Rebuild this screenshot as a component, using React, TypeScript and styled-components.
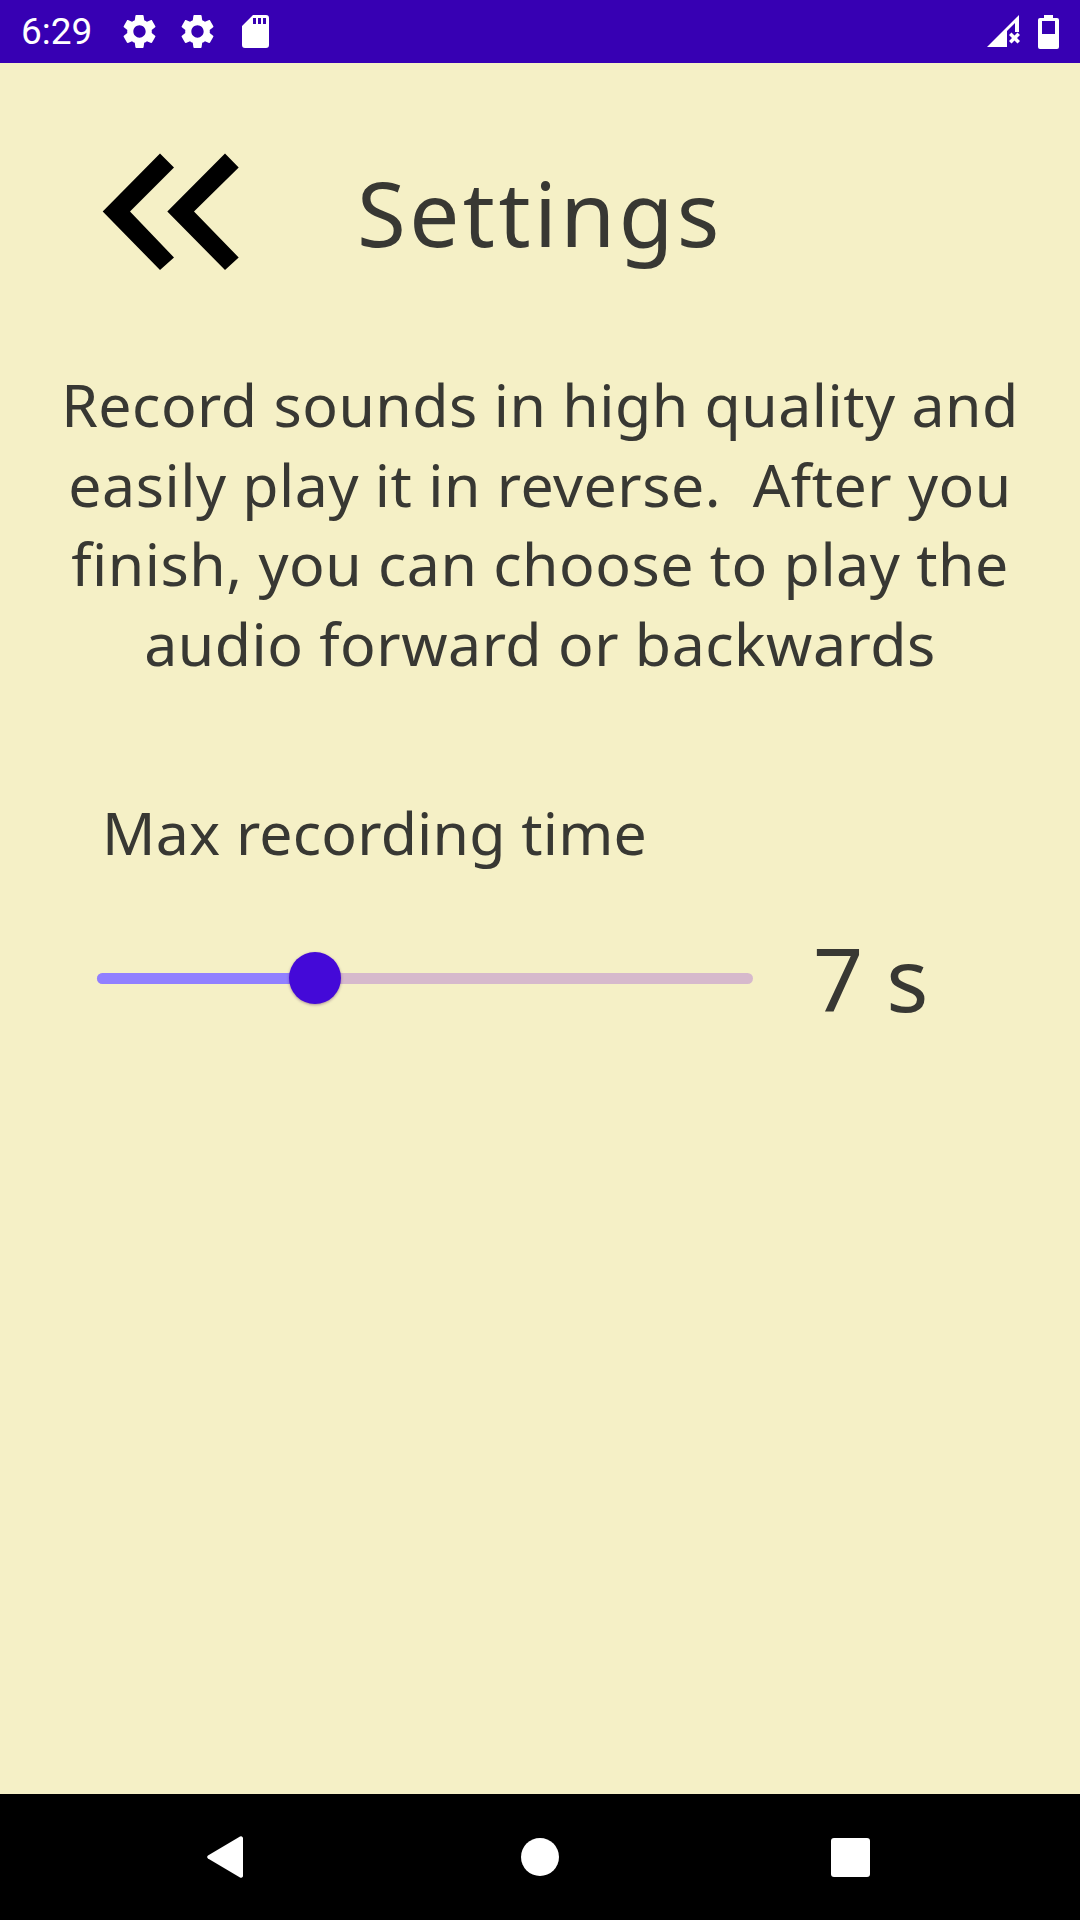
import styled, { createGlobalStyle } from 'styled-components';

const GEAR =
  'M19.14 12.94c.04-.3.06-.61.06-.94 0-.32-.02-.64-.07-.94l2.03-1.58c.18-.14.23-.41.12-.61l-1.92-3.32c-.12-.22-.37-.29-.59-.22l-2.39.96c-.5-.38-1.03-.7-1.62-.94l-.36-2.54c-.04-.24-.24-.41-.48-.41h-3.84c-.24 0-.43.17-.47.41l-.36 2.54c-.59.24-1.13.57-1.62.94l-2.39-.96c-.22-.08-.47 0-.59.22L2.74 8.87c-.12.21-.08.47.12.61l2.03 1.58c-.05.3-.09.63-.09.94s.02.64.07.94l-2.03 1.58c-.18.14-.23.41-.12.61l1.92 3.32c.12.22.37.29.59.22l2.39-.96c.5.38 1.03.7 1.62.94l.36 2.54c.05.24.24.41.48.41h3.84c.24 0 .44-.17.47-.41l.36-2.54c.59-.24 1.13-.56 1.62-.94l2.39.96c.22.08.47 0 .59-.22l1.92-3.32c.12-.22.07-.47-.12-.61l-2.01-1.58zM12 15.6c-1.98 0-3.6-1.62-3.6-3.6s1.62-3.6 3.6-3.6 3.6 1.62 3.6 3.6-1.62 3.6-3.6 3.6z';

const GlobalStyle = createGlobalStyle`
  html, body {
    margin: 0;
    padding: 0;
    background: #f5f0c6;
  }
`;

const Screen = styled.div`
  width: 1080px;
  height: 1920px;
  display: flex;
  flex-direction: column;
  background: #f5f0c6;
  color: #383833;
  font-family: "Noto Sans", sans-serif;
  overflow: hidden;
`;

const StatusBar = styled.div`
  height: 63px;
  flex: none;
  display: flex;
  align-items: center;
  padding: 0 21px 0 21px;
  background: #3700b3;
  color: #fff;
`;

const Clock = styled.span`
  font-family: Roboto, sans-serif;
  font-size: 37px;
  width: 98px;
`;

const StatusIcons = styled.div`
  display: flex;
  align-items: center;
  gap: 17px;
`;

const SdCardIcon = styled.svg`
  margin-left: 7px;
`;

const RightIcons = styled.div`
  display: flex;
  align-items: center;
  gap: 17px;
  margin-left: auto;
`;

const Content = styled.main`
  flex: 1;
  display: flex;
  flex-direction: column;
`;

const Header = styled.header`
  display: flex;
  align-items: center;
  padding: 86px 0 0 102px;
  height: 126px;
`;

const BackIcon = styled.svg`
  width: 137px;
  height: 118px;
  flex: none;
`;

const Title = styled.h1`
  margin: 0 0 0 118px;
  font-size: 89px;
  font-weight: 400;
  letter-spacing: 3.4px;
`;

const Intro = styled.p`
  margin: 90px 0 0;
  padding: 0 40px;
  text-align: center;
  font-size: 59px;
  line-height: 79.5px;
  letter-spacing: 0.5px;
`;

const FieldLabel = styled.div`
  margin: 109px 0 0 102px;
  font-size: 59px;
  line-height: 80px;
  letter-spacing: 0.2px;
`;

const SliderRow = styled.div`
  display: flex;
  align-items: center;
  margin-top: 56px;
  padding-left: 97px;
`;

const Track = styled.div`
  position: relative;
  width: 656px;
  height: 11px;
  border-radius: 6px;
  background: #d6b9cc;
`;

const TrackFill = styled.div`
  height: 100%;
  border-radius: 6px 0 0 6px;
  background: #9180ff;
`;

const Thumb = styled.div`
  position: absolute;
  top: 50%;
  width: 52px;
  height: 52px;
  border-radius: 50%;
  background: #4409d8;
  box-shadow: 0 1px 3px rgba(60, 0, 80, 0.4);
  transform: translate(-50%, -50%);
`;

const SliderValue = styled.span`
  margin-left: 60px;
  font-size: 88px;
  line-height: 100px;
`;

const NavBar = styled.nav`
  height: 126px;
  flex: none;
  display: flex;
  align-items: center;
  justify-content: space-between;
  padding: 0 210px 0 207px;
  background: #000;
`;

const NavCircle = styled.div`
  width: 38px;
  height: 38px;
  margin-left: 6px;
  border-radius: 50%;
  background: #fff;
`;

const NavSquare = styled.div`
  width: 39px;
  height: 39px;
  border-radius: 3px;
  background: #fff;
`;

const Gear = () => (
  <svg width="41" height="41" viewBox="0 0 24 24" fill="#fff">
    <path d={GEAR} />
  </svg>
);

const SdCard = () => (
  <SdCardIcon width="27" height="33" viewBox="0 0 27 33" fill="#fff">
    <path
      fillRule="evenodd"
      d="M11 0H24a3 3 0 0 1 3 3V30a3 3 0 0 1-3 3H3a3 3 0 0 1-3-3V11ZM11 3V9H14V3ZM16 3V9H19V3ZM21 3V9H24V3Z"
    />
  </SdCardIcon>
);

const Signal = () => (
  <svg width="34" height="33" viewBox="0 0 34 33" fill="#fff">
    <path
      fillRule="evenodd"
      d="M0 32L32 0V17H28V8L20 16V32ZM22 20L24.5 17.5 27.5 20.5 30.5 17.5 33 20 30 23 33 26 30.5 28.5 27.5 25.5 24.5 28.5 22 26 25 23Z"
    />
  </svg>
);

const Battery = () => (
  <svg width="21" height="34" viewBox="0 0 21 34" fill="#fff">
    <path
      fillRule="evenodd"
      d="M6 0H15V3H19a2 2 0 0 1 2 2V32a2 2 0 0 1-2 2H2a2 2 0 0 1-2-2V5a2 2 0 0 1 2-2H6ZM4 6V19H17V6Z"
    />
  </svg>
);

const App = () => {
  const sliderPercent = 33.2;

  return (
    <>
      <GlobalStyle />
      <Screen>
        <StatusBar>
          <Clock>6:29</Clock>
          <StatusIcons>
            <Gear />
            <Gear />
            <SdCard />
          </StatusIcons>
          <RightIcons>
            <Signal />
            <Battery />
          </RightIcons>
        </StatusBar>

        <Content>
          <Header>
            <BackIcon viewBox="0 0 137 118" fill="#000">
              <path d="M0.7 58.5 58 0.5 72 14.5 28 58.5 72 104.5 58 117ZM65.3 58.5 123 0.5 136.7 14.5 92 58.5 136.7 104.5 123 117Z" />
            </BackIcon>
            <Title>Settings</Title>
          </Header>

          <Intro>
            Record sounds in high quality and
            <br />
            easily play it in reverse.&nbsp; After you
            <br />
            finish, you can choose to play the
            <br />
            audio forward or backwards
          </Intro>

          <FieldLabel>Max recording time</FieldLabel>
          <SliderRow>
            <Track>
              <TrackFill style={{ width: `${sliderPercent}%` }} />
              <Thumb style={{ left: `${sliderPercent}%` }} />
            </Track>
            <SliderValue>7 s</SliderValue>
          </SliderRow>
        </Content>

        <NavBar>
          <svg width="36" height="42" viewBox="0 0 36 42" fill="#fff">
            <path d="M33 0.5a2 2 0 0 1 3 1.5V40a2 2 0 0 1-3 1.5L1 22.5a2 2 0 0 1 0-3Z" />
          </svg>
          <NavCircle />
          <NavSquare />
        </NavBar>
      </Screen>
    </>
  );
};

export default App;
